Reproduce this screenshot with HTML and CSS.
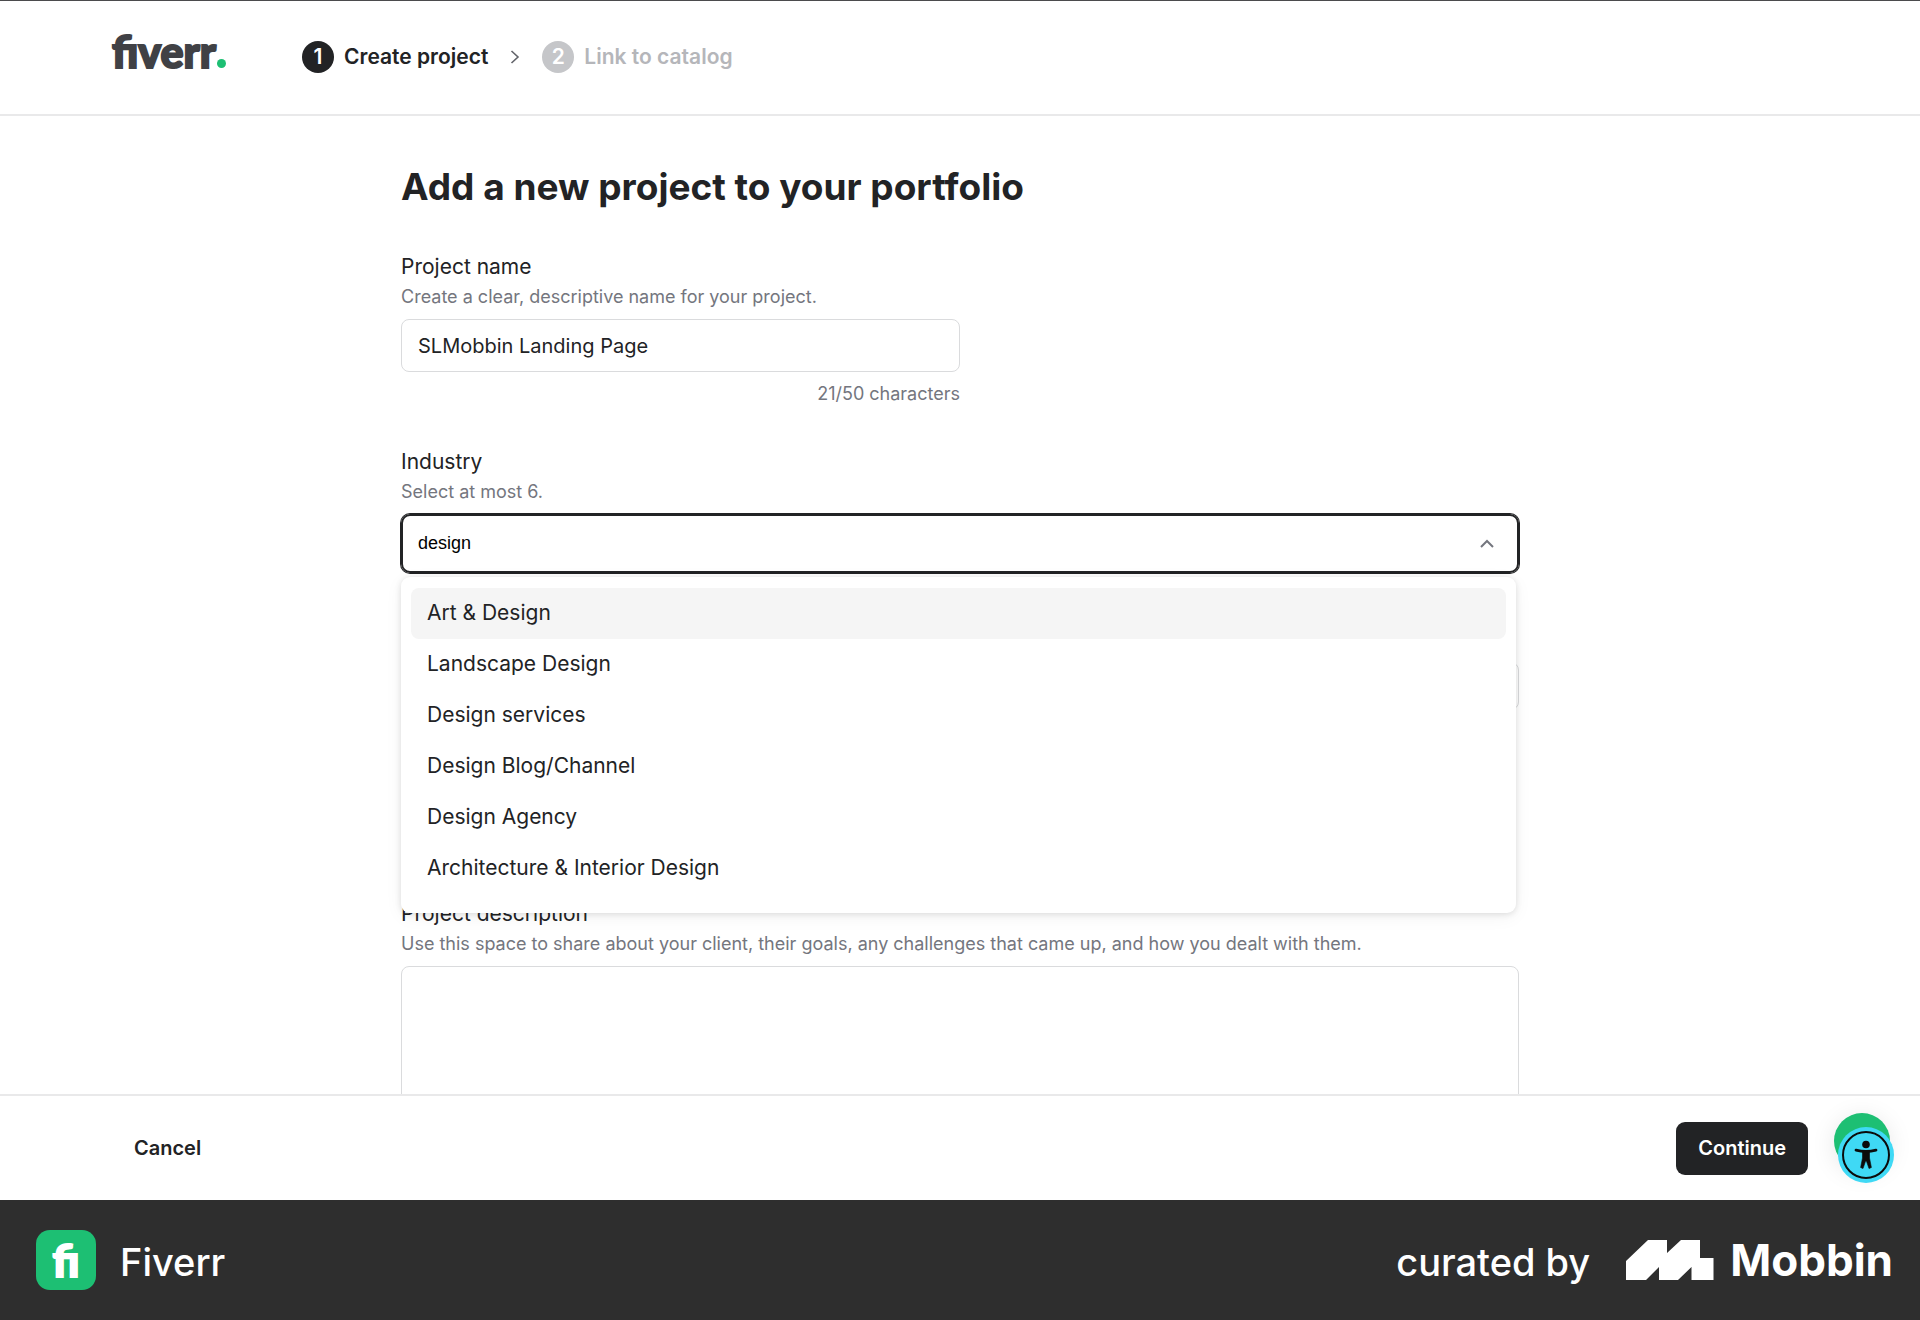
FILE: index.html
```html
<!DOCTYPE html>
<html lang="en">
<head>
<meta charset="utf-8">
<meta name="viewport" content="width=device-width, initial-scale=1">
<title>Add a new project | Fiverr</title>
<link rel="stylesheet" href="styles.css">
</head>
<body>
<header class="topbar">
  <a class="logo" href="#">fiverr<span class="logo-dot"></span></a>
  <ol class="steps">
    <li class="step"><span class="step-number">1</span>Create project</li>
    <li class="step-arrow" aria-hidden="true">
      <svg width="10" height="16" viewBox="0 0 10 16" fill="none" stroke="#62646a" stroke-width="1.6"><path d="M1.5 2 L8 8 L1.5 14"/></svg>
    </li>
    <li class="step step-upcoming"><span class="step-number">2</span>Link to catalog</li>
  </ol>
</header>

<main class="content">
  <form class="form" id="project-form">
    <h1 class="title">Add a new project to your portfolio</h1>

    <div class="field field-half">
      <label class="label" for="name">Project name</label>
      <p class="hint">Create a clear, descriptive name for your project.</p>
      <input class="input" id="name" type="text" value="SLMobbin Landing Page">
      <p class="counter">21/50 characters</p>
    </div>

    <div class="field">
      <label class="label" for="industry">Industry</label>
      <p class="hint">Select at most 6.</p>
      <div class="combo">
        <input class="combo-input" id="industry" type="text" role="combobox" aria-expanded="true" aria-controls="industry-list" value="design">
        <svg class="combo-arrow" width="16" height="10" viewBox="0 0 16 10" fill="none" stroke="#74767e" stroke-width="2"><path d="M2 8 L8 2 L14 8"/></svg>
        <ul class="options" id="industry-list" role="listbox">
          <li class="option option-active" role="option" aria-selected="true">Art &amp; Design</li>
          <li class="option" role="option">Landscape Design</li>
          <li class="option" role="option">Design services</li>
          <li class="option" role="option">Design Blog/Channel</li>
          <li class="option" role="option">Design Agency</li>
          <li class="option" role="option">Architecture &amp; Interior Design</li>
        </ul>
      </div>
    </div>

    <div class="field field-covered">
      <input class="input input-short" type="text" aria-label="Skills">
    </div>

    <div class="field">
      <label class="label" for="description">Project description</label>
      <p class="hint">Use this space to share about your client, their goals, any challenges that came up, and how you dealt with them.</p>
      <textarea class="input textarea" id="description"></textarea>
    </div>
  </form>
</main>

<footer class="actions">
  <button class="button button-text" type="button">Cancel</button>
  <button class="button button-primary" type="submit" form="project-form">Continue</button>
  <div class="widgets">
    <button class="chat" type="button" aria-label="Chat"></button>
    <button class="access" type="button" aria-label="Accessibility">
      <svg width="56" height="56" viewBox="0 0 56 56">
        <circle cx="28" cy="28" r="28" fill="#3fd9f5"/>
        <circle cx="28" cy="28" r="23" fill="none" stroke="#0b0b0b" stroke-width="2"/>
        <circle cx="28" cy="17.500" r="3.800" fill="#0b0b0b"/>
        <path d="M18 23.2 Q28 25.8 38 23.2" fill="none" stroke="#0b0b0b" stroke-width="2.8" stroke-linecap="round"/>
        <path d="M24.500 23.500 H31.500 V31 L33.400 40.500 L31 41.500 L28.400 34 H27.600 L25 41.500 L22.600 40.500 L24.500 31 Z" fill="#0b0b0b" stroke="#0b0b0b" stroke-width="0.6" stroke-linejoin="round"/>
      </svg>
    </button>
  </div>
</footer>

<aside class="credit">
  <span class="app-icon" aria-hidden="true">fi</span>
  <span class="app-name">Fiverr</span>
  <span class="curated">curated by</span>
  <svg class="mobbin-mark" width="88" height="40" viewBox="0 0 88 40" fill="#fff"><path d="M0 21 L22 0 H41 V13 L55 0 H74 V18 H87.500 V40 H65.500 V27 L52 40 H33 V27 L20 40 H0 Z"/></svg>
  <span class="mobbin-name">Mobbin</span>
</aside>
</body>
</html>
```
FILE: styles.css
```css
* {
  box-sizing: border-box;
}

body {
  margin: 0;
  height: 100vh;
  display: flex;
  flex-direction: column;
  background: #fff;
  color: #222325;
  font-family: Inter, "Liberation Sans", sans-serif;
  font-size: 21px;
  line-height: 28px;
}

h1, p, ol, ul {
  margin: 0;
  padding: 0;
  list-style: none;
}

/* Header */
.topbar {
  flex: none;
  display: flex;
  align-items: center;
  gap: 76px;
  height: 116px;
  padding: 0 112px 2px;
  border-top: 1px solid #4b4b4d;
  border-bottom: 2px solid #e9e9ea;
}

.logo {
  display: flex;
  align-items: baseline;
  gap: 1px;
  padding-bottom: 10px;
  color: #404145;
  font-family: Lato, sans-serif;
  font-size: 43px;
  font-weight: 900;
  line-height: 48px;
  text-decoration: none;
  -webkit-text-stroke: 2px #404145;
}

.logo-dot {
  width: 9px;
  height: 9px;
  border-radius: 50%;
  background: #1dbf73;
}

.steps {
  display: flex;
  align-items: center;
  gap: 22px;
}

.step {
  display: flex;
  align-items: center;
  gap: 10px;
  font-weight: 600;
}

.step-number {
  display: grid;
  place-items: center;
  width: 32px;
  height: 32px;
  border-radius: 50%;
  background: #222325;
  color: #fff;
}

.step-arrow {
  display: flex;
}

.step-upcoming {
  color: #b5b6ba;
}

.step-upcoming .step-number {
  background: #c5c6c9;
}

/* Form */
.content {
  flex: 1;
  min-height: 0;
  overflow: hidden;
  padding: 49px 24px 0;
}

.form {
  max-width: 1118px;
  margin: 0 auto;
}

.title {
  margin-bottom: 44px;
  font-size: 37px;
  font-weight: 700;
  line-height: 44px;
}

.field {
  margin-bottom: 40px;
}

.field-half {
  max-width: 559px;
}

.label {
  display: block;
}

.hint {
  margin-top: 2px;
}

.hint,
.counter {
  color: #74767e;
  font-size: 18px;
}

.counter {
  margin-top: 8px;
  text-align: right;
}

.input {
  display: block;
  width: 100%;
  height: 53px;
  padding: 0 16px;
  border: 1px solid #dadbdd;
  border-radius: 8px;
  background: #fff;
  color: inherit;
  font: inherit;
  font-size: 20px;
}

.hint + .input,
.hint + .combo {
  margin-top: 8px;
}

.input-short {
  height: 48px;
}

.textarea {
  height: 240px;
  padding: 16px;
  border-width: 1px;
  resize: none;
}

.field-covered {
  margin: 89px 0 190px;
}

.combo {
  position: relative;
  display: flex;
  align-items: center;
  height: 59px;
  padding: 0 22px 0 15px;
  border: 2px solid #222325;
  border-radius: 9px;
  box-shadow: 0 0 0 1px #222325;
}

.combo-input {
  flex: 1;
  min-width: 0;
  padding: 0;
  border: 0;
  outline: 0;
  background: none;
  color: #000;
  font-family: "Liberation Sans", sans-serif;
  font-size: 18px;
}

.options {
  position: absolute;
  z-index: 1;
  top: 61px;
  left: -2px;
  right: 1px;
  padding: 11px 10px 19px;
  border-radius: 9px;
  background: #fff;
  box-shadow: 0 1px 6px rgba(0, 0, 0, 0.12), 0 4px 18px rgba(0, 0, 0, 0.05);
}

.option {
  padding: 11px 16px 12px;
  border-radius: 8px;
}

.option-active {
  background: #f5f5f5;
}

/* Action bar */
.actions {
  flex: none;
  display: flex;
  align-items: center;
  height: 106px;
  padding: 0 26px 0 112px;
  border-top: 2px solid #e9e9ea;
}

.button {
  height: 53px;
  padding: 0 22px;
  border: 0;
  border-radius: 9px;
  background: none;
  color: #222325;
  font: inherit;
  font-size: 20px;
  font-weight: 600;
}

.button-primary {
  margin-left: auto;
  background: #222325;
  color: #fff;
}

.widgets {
  position: relative;
  width: 60px;
  height: 70px;
  margin-left: 26px;
}

.chat,
.access {
  position: absolute;
  width: 56px;
  height: 56px;
  padding: 0;
  border: 0;
  border-radius: 50%;
}

.chat {
  top: 0;
  left: 0;
  background: #1dbf73;
  box-shadow: 0 4px 24px rgba(0, 0, 0, 0.1);
}

.access {
  right: 0;
  bottom: 0;
  background: none;
}

.access svg {
  display: block;
}

/* Credit strip */
.credit {
  flex: none;
  display: flex;
  align-items: center;
  height: 120px;
  padding: 0 27px 0 36px;
  background: #2e2e2e;
  color: #fff;
  font-size: 38px;
  font-weight: 500;
  line-height: 48px;
}

.app-icon {
  display: grid;
  place-items: center;
  width: 60px;
  height: 60px;
  margin-right: 24px;
  border-radius: 14px;
  background: #1dbf73;
  font-family: Lato, sans-serif;
  font-size: 44px;
  font-weight: 900;
  -webkit-text-stroke: 2px #fff;
}

.app-name,
.curated {
  padding-top: 4px;
}

.curated {
  margin-left: auto;
}

.mobbin-mark {
  margin: 0 16px 0 36px;
}

.mobbin-name {
  font-size: 44px;
  font-weight: 700;
}
```
